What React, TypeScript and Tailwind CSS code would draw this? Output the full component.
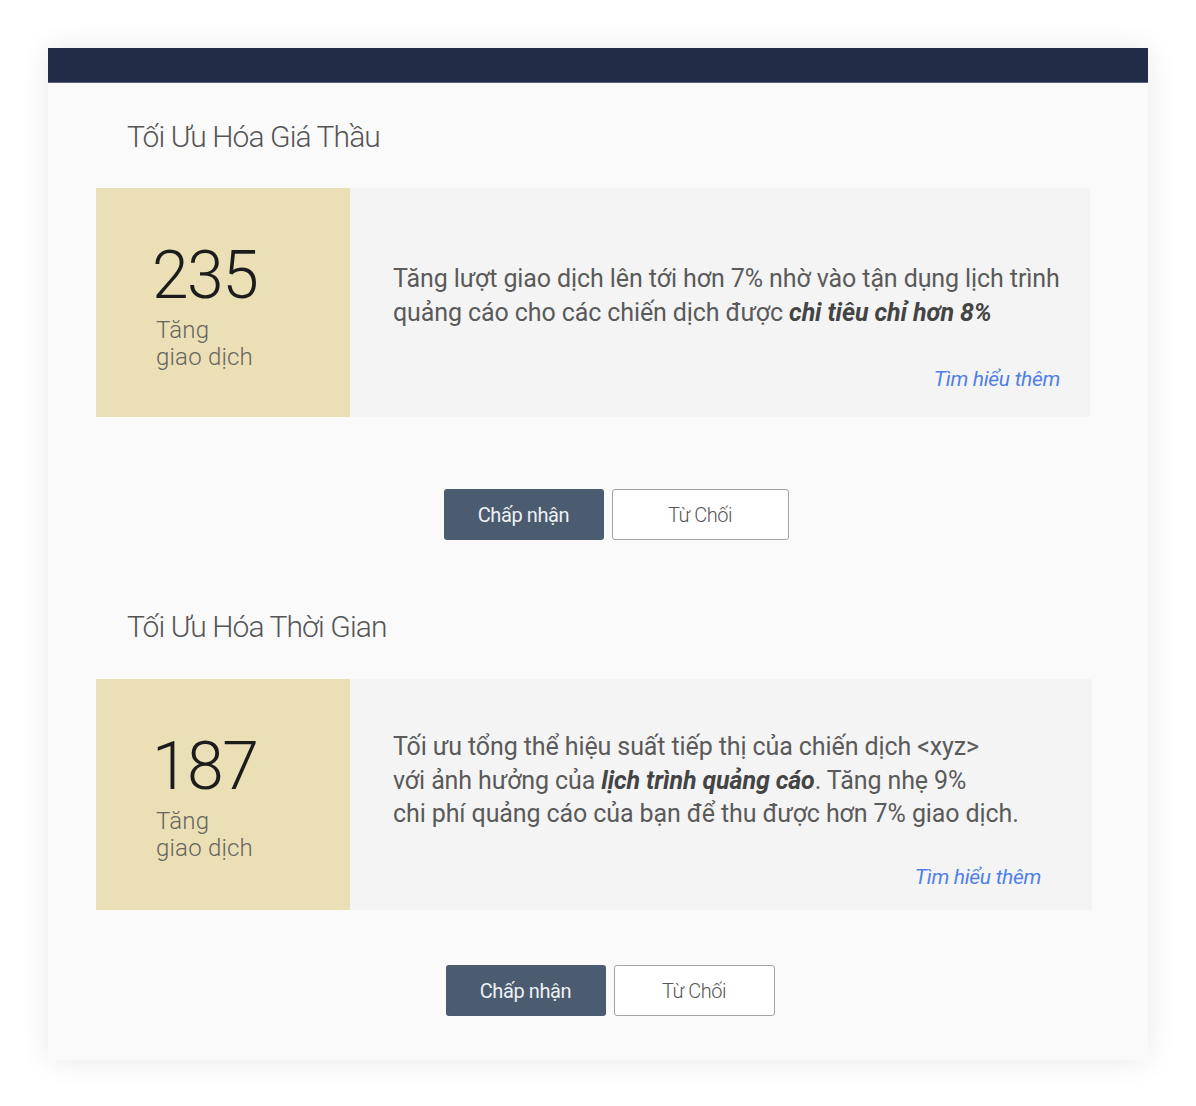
import React from 'react'

const font = { fontFamily: 'Roboto, "Noto Sans", sans-serif' }

function Actions({ rejectWidth, offset }: { rejectWidth: string; offset: string }) {
  return (
    <div className={`flex justify-center gap-2 ${offset}`}>
      <button className="h-[51px] w-[160px] rounded-[3px] bg-[#4b5b70] text-[20px] tracking-[-0.4px] text-[#eef1f4]">
        Chấp nhận
      </button>
      <button
        className={`h-[51px] ${rejectWidth} rounded-[3px] border border-[#a3a3a3] bg-white text-[20px] font-light tracking-[-0.5px] text-[#555]`}
      >
        Từ Chối
      </button>
    </div>
  )
}

function Stat({ value }: { value: string }) {
  return (
    <div className="w-[254px] shrink-0 bg-[#ebdfb6] pl-[56px] pt-[55px]">
      <div className="text-[66px] font-light leading-none tracking-[-1.5px] text-[#1c1c1c]">
        {value}
      </div>
      <div className="ml-[4px] mt-[8px] text-[24px] font-light leading-[27px] tracking-[0.2px] text-[#66655f]">
        Tăng
        <br />
        giao dịch
      </div>
    </div>
  )
}

export default function App() {
  return (
    <div className="min-h-[1106px] bg-white pl-[48px] pt-[48px]" style={font}>
      <div className="w-[1100px] bg-[#fafafa] pb-[44px] shadow-[0_0_28px_rgba(0,0,0,0.09)]">
        <div className="h-[35px] border-b border-[#5d6479] bg-[#232c46]" />

        <section className="pl-[48px]">
          <h2 className="pl-[31px] pt-[36px] text-[30px] font-light leading-[36px] tracking-[-0.9px] text-[#555]">
            Tối Ưu Hóa Giá Thầu
          </h2>
          <div className="mt-[33px] flex h-[229px] w-[994px]">
            <Stat value="235" />
            <div className="flex flex-1 flex-col bg-[#f4f4f4] pl-[43px] pr-[30px] pt-[74px]">
              <p className="whitespace-nowrap text-[25px] leading-[34px] tracking-[-0.1px] text-[#5a5a5a]">
                Tăng lượt giao dịch lên tới hơn 7% nhờ vào tận dụng lịch trình
                <br />
                quảng cáo cho các chiến dịch được{' '}
                <b className="font-bold italic text-[#444]">chi tiêu chỉ hơn 8%</b>
              </p>
              <a className="mt-[35px] self-end text-[21px] italic leading-[28px] tracking-[-0.3px] text-[#4f7fe8]">
                Tìm hiểu thêm
              </a>
            </div>
          </div>
        </section>

        <div className="mt-[72px]">
          <Actions rejectWidth="w-[177px]" offset="pl-[36px]" />
        </div>

        <section className="pl-[48px]">
          <h2 className="pl-[31px] pt-[69px] text-[30px] font-light leading-[36px] tracking-[-0.9px] text-[#555]">
            Tối Ưu Hóa Thời Gian
          </h2>
          <div className="mt-[34px] flex h-[231px] w-[996px]">
            <Stat value="187" />
            <div className="flex flex-1 flex-col bg-[#f4f4f4] pl-[43px] pr-[51px] pt-[51px]">
              <p className="whitespace-nowrap text-[25px] leading-[33.5px] tracking-[-0.1px] text-[#5a5a5a]">
                Tối ưu tổng thể hiệu suất tiếp thị của chiến dịch &lt;xyz&gt;
                <br />
                với ảnh hưởng của{' '}
                <b className="font-bold italic text-[#444]">lịch trình quảng cáo</b>. Tăng nhẹ 9%
                <br />
                chi phí quảng cáo của bạn để thu được hơn 7% giao dịch.
              </p>
              <a className="mt-[32px] self-end text-[21px] italic leading-[28px] tracking-[-0.3px] text-[#4f7fe8]">
                Tìm hiểu thêm
              </a>
            </div>
          </div>
        </section>

        <div className="mt-[55px]">
          <Actions rejectWidth="w-[161px]" offset="pl-[24px]" />
        </div>
      </div>
    </div>
  )
}
